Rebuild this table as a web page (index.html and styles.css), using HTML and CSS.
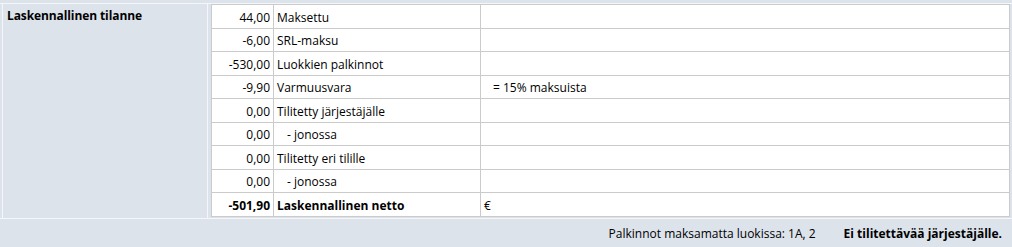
FILE: index.html
```html
<!DOCTYPE html>
<html lang="fi">

<head>
    <meta charset="UTF-8">
    <meta name="viewport" content="width=device-width, initial-scale=1.0">
    <title>Laskennallinen tilanne</title>
    <link rel="stylesheet" href="styles.css">
</head>

<body>

    <div class="summary">
        <div class="summary-body">
            <div class="summary-title">Laskennallinen tilanne</div>
            <div class="summary-data">
                <table class="ledger">
                    <colgroup>
                        <col class="col-num">
                        <col class="col-label">
                        <col>
                    </colgroup>
                    <tr><td class="num">44,00</td><td>Maksettu</td><td></td></tr>
                    <tr><td class="num">-6,00</td><td>SRL-maksu</td><td></td></tr>
                    <tr><td class="num">-530,00</td><td>Luokkien palkinnot</td><td></td></tr>
                    <tr><td class="num">-9,90</td><td>Varmuusvara</td><td class="note">= 15% maksuista</td></tr>
                    <tr><td class="num">0,00</td><td>Tilitetty järjestäjälle</td><td></td></tr>
                    <tr><td class="num">0,00</td><td class="sub">- jonossa</td><td></td></tr>
                    <tr><td class="num">0,00</td><td>Tilitetty eri tilille</td><td></td></tr>
                    <tr><td class="num">0,00</td><td class="sub">- jonossa</td><td></td></tr>
                    <tr class="total"><td class="num">-501,90</td><td>Laskennallinen netto</td><td class="currency">€</td></tr>
                </table>
            </div>
        </div>
        <div class="summary-foot">
            <span>Palkinnot maksamatta luokissa: 1A, 2</span>
            <strong>Ei tilitettävää järjestäjälle.</strong>
        </div>
    </div>

</body>

</html>
```

FILE: styles.css
```css
body {
    margin: 0;
    font-family: "Open Sans", "Noto Sans", sans-serif;
    font-size: 12px;
    color: #000;
    background: #dce3eb;
}

.summary {
    padding-top: 3px;
    background: #dce3eb;
    min-height: 244px;
}

.summary-body {
    display: flex;
    border-top: 1px solid #f4f6f9;
}

.summary-title {
    width: 200px;
    margin-left: 2px;
    padding: 3px 0 0 4px;
    border-left: 1px solid #f4f6f9;
    border-right: 1px solid #f4f6f9;
    font-weight: bold;
    letter-spacing: -0.1px;
    flex-shrink: 0;
}

.summary-data {
    flex: 1;
    padding: 0 2px 1px 3px;
}

.ledger {
    width: 100%;
    table-layout: fixed;
    border-collapse: collapse;
    background: #fff;
}

.ledger .col-num {
    width: 62px;
}

.ledger .col-label {
    width: 207px;
}

.ledger td {
    height: 20.5px;
    padding: 2px 3px 0;
    border: 1px solid #cbcbcb;
    white-space: nowrap;
}

.ledger .num {
    text-align: right;
}

.ledger .sub {
    padding-left: 13px;
}

.ledger .note {
    padding-left: 12px;
}

.ledger .total td {
    font-weight: bold;
}

.ledger .total .currency {
    font-weight: normal;
}

.summary-foot {
    display: flex;
    justify-content: flex-end;
    gap: 28px;
    padding: 6px 10px 0 0;
    height: 22px;
    border-top: 1px solid #f4f6f9;
}
```
